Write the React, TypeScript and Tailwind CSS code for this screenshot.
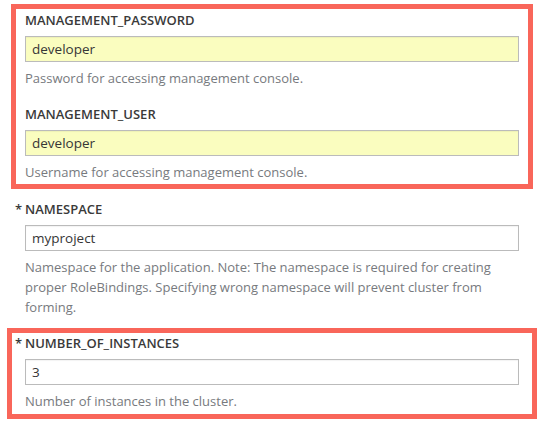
import React from 'react';

type FieldProps = {
  name: string;
  value: string;
  help: string;
  required?: boolean;
  autofill?: boolean;
};

function Field({ name, value, help, required, autofill }: FieldProps) {
  return (
    <div className="flex flex-col">
      <label className="flex h-[20px] items-center text-[13px] font-semibold leading-[20px] text-[#3a3a3a]">
        {required && <span className="-ml-[10px] w-[10px]">*</span>}
        {name}
      </label>
      <input
        readOnly
        value={value}
        className={`mt-[6px] h-[26px] w-full border border-[#bbbbbb] px-[6px] text-[13.5px] text-[#363636] outline-none shadow-[inset_0_1px_1px_rgba(0,0,0,0.05)] ${
          autofill ? 'bg-[#fafdbf]' : 'bg-white'
        }`}
      />
      <p className="mt-[6px] text-[13px] leading-[20px] text-[#777a7e]">{help}</p>
    </div>
  );
}

export default function App() {
  return (
    <div
      className="min-h-[431px] w-[546px] bg-white pt-[4px]"
      style={{ fontFamily: '"Open Sans", "Noto Sans", sans-serif' }}
    >
      <div className="ml-[25px] flex w-[494px] flex-col">
        <div className="-mx-[14px] flex flex-col gap-[16px] border-[5px] border-[#f9665a] px-[9px] pb-[2px] pt-[1px]">
          <Field
            name="MANAGEMENT_PASSWORD"
            value="developer"
            help="Password for accessing management console."
            autofill
          />
          <Field
            name="MANAGEMENT_USER"
            value="developer"
            help="Username for accessing management console."
            autofill
          />
        </div>

        <div className="mt-[10px]">
          <Field
            name="NAMESPACE"
            value="myproject"
            help="Namespace for the application. Note: The namespace is required for creating proper RoleBindings. Specifying wrong namespace will prevent cluster from forming."
            required
          />
        </div>

        <div className="-mx-[18px] mt-[11px] border-[5px] border-[#f9665a] px-[13px] pb-[3px]">
          <Field
            name="NUMBER_OF_INSTANCES"
            value="3"
            help="Number of instances in the cluster."
            required
          />
        </div>
      </div>
    </div>
  );
}
